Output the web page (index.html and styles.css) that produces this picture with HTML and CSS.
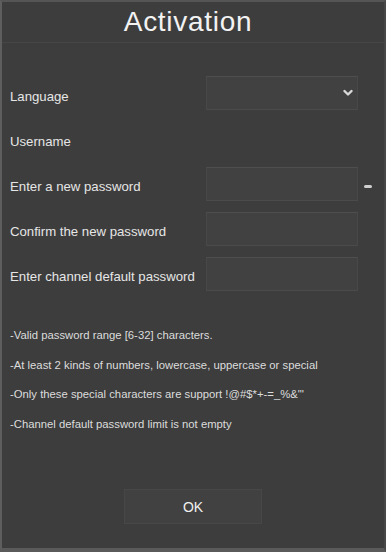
FILE: index.html
```html
<!DOCTYPE html>
<html>
<head>
<meta charset="utf-8">
<link rel="stylesheet" href="styles.css">
</head>
<body>
<div class="dialog">
  <div class="title">Activation</div>
  <div class="form">
    <div class="row">
      <span class="label">Language</span>
      <div class="field select">
        <svg class="chev" width="10" height="8" viewBox="0 0 10 8"><path d="M1.5 2 L5 5.5 L8.5 2" fill="none" stroke="#d8d8d8" stroke-width="2.4" stroke-linecap="round" stroke-linejoin="round"/></svg>
      </div>
      <span></span>
    </div>
    <div class="row">
      <span class="label">Username</span>
      <span></span>
      <span></span>
    </div>
    <div class="row">
      <span class="label">Enter a new password</span>
      <div class="field"></div>
      <span class="minus"></span>
    </div>
    <div class="row">
      <span class="label">Confirm the new password</span>
      <div class="field"></div>
      <span></span>
    </div>
    <div class="row">
      <span class="label">Enter channel default password</span>
      <div class="field"></div>
      <span></span>
    </div>
  </div>
  <div class="hints">
    <p>-Valid password range [6-32] characters.</p>
    <p>-At least 2 kinds of numbers, lowercase, uppercase or special</p>
    <p>-Only these special characters are support !@#$*+-=_%&amp;"'</p>
    <p>-Channel default password limit is not empty</p>
  </div>
  <div class="actions">
    <button class="ok">OK</button>
  </div>
</div>
</body>
</html>
```
FILE: styles.css
```css
html, body {
  margin: 0;
  padding: 0;
  background: #3c3c3c;
}
.dialog {
  width: 386px;
  height: 552px;
  box-sizing: border-box;
  background: #3d3d3d;
  border: 2px solid #555555;
  border-left-color: #5e5e5e;
  border-right-color: #474747;
  border-bottom: 4px solid #5a5a5a;
  display: flex;
  flex-direction: column;
  font-family: "Liberation Sans", Arial, sans-serif;
  color: #e6e6e6;
}
.title {
  height: 40px;
  border-bottom: 1px solid #464646;
  text-align: center;
  font-size: 28px;
  letter-spacing: 0.7px;
  line-height: 40px;
  color: #f2f2f2;
  padding-right: 10px;
}
.form {
  padding-top: 31px;
}
.row {
  display: grid;
  grid-template-columns: minmax(0, 1fr) 152px 26px;
  align-items: center;
  height: 45px;
  padding-left: 8px;
}
.label {
  font-size: 13.2px;
  white-space: nowrap;
}
.field {
  height: 34px;
  margin-top: -6px;
  box-sizing: border-box;
  background: #414141;
  border: 1px solid #484848;
  border-top-color: #4e4e4e;
  border-bottom-color: #4b4b4b;
  display: flex;
  align-items: center;
  justify-content: flex-end;
}
.select {
  margin-top: -7px;
}
.chev {
  margin-right: 4px;
  margin-top: -1px;
}
.minus {
  justify-self: center;
  width: 8px;
  height: 3px;
  border-radius: 2px;
  background: #cfcfcf;
  margin-left: -6px;
}
.hints {
  margin-top: 22px;
  padding-left: 8px;
}
.hints p {
  margin: 0;
  height: 29.5px;
  line-height: 29.5px;
  font-size: 11.3px;
  color: #dcdcdc;
  white-space: nowrap;
}
.actions {
  margin-top: 50px;
  display: flex;
  justify-content: center;
}
.ok {
  width: 138px;
  height: 35px;
  background: #414141;
  border: 1px solid #474747;
  color: #f0f0f0;
  font-family: "Liberation Sans", Arial, sans-serif;
  font-size: 14px;
  padding: 0;
}
```
